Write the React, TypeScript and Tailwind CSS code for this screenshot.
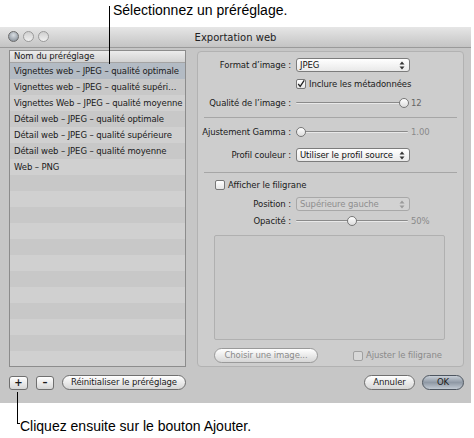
const ui = "font-['DejaVu_Sans',sans-serif] text-[8.5px] tracking-[-0.1px] text-[#1a1a1a]";

const presets = [
  "Vignettes web – JPEG – qualité optimale",
  "Vignettes web – JPEG – qualité supéri…",
  "Vignettes Web – JPEG – qualité moyenne",
  "Détail web – JPEG – qualité optimale",
  "Détail web – JPEG – qualité supérieure",
  "Détail web – JPEG – qualité moyenne",
  "Web – PNG",
];

function Arrows({ faded }: { faded?: boolean }) {
  const c = faded ? "#9a9a9a" : "#333";
  return (
    <svg width="6" height="9" viewBox="0 0 6 9" className="shrink-0">
      <path d="M3 0.5 L5.5 3.5 H0.5 Z" fill={c} />
      <path d="M3 8.5 L5.5 5.5 H0.5 Z" fill={c} />
    </svg>
  );
}

function Select({ value, disabled }: { value: string; disabled?: boolean }) {
  return (
    <div
      className={`flex h-[14px] w-[114px] items-center justify-between rounded-[3px] border pl-[3px] pr-[4px] ${
        disabled
          ? "border-[#a8a8a8] bg-[#d2d2d2] text-[#8e8e8e]"
          : "border-[#7c7c7c] bg-gradient-to-b from-white to-[#e9e9e9] text-[#111]"
      }`}
    >
      <span className="whitespace-nowrap leading-none">{value}</span>
      <Arrows faded={disabled} />
    </div>
  );
}

function Slider({ pos, value, faded }: { pos: number; value: string; faded?: boolean }) {
  return (
    <div className="flex items-center">
      <div className="relative h-[10px] w-[112px]">
        <div className="absolute left-0 right-0 top-[4px] h-[2px] rounded-full border-t border-[#8a8a8a] bg-[#e8e8e8]" />
        <div
          className="absolute top-0 h-[10px] w-[10px] rounded-full border border-[#777] bg-gradient-to-b from-white to-[#dcdcdc]"
          style={{ left: pos - 5 }}
        />
      </div>
      <span className={`ml-[3px] ${faded ? "text-[#8a8a8a]" : "text-[#666]"}`}>{value}</span>
    </div>
  );
}

function Check({ checked, faded }: { checked?: boolean; faded?: boolean }) {
  return (
    <div
      className={`flex h-[10px] w-[10px] shrink-0 items-center justify-center rounded-[2px] border ${
        faded ? "border-[#a0a0a0] bg-[#d8d8d8]" : "border-[#777] bg-gradient-to-b from-white to-[#e6e6e6]"
      }`}
    >
      {checked && (
        <svg width="10" height="10" viewBox="0 0 10 10">
          <path d="M1.5 5 L4 8 L9 0.5" stroke="#222" strokeWidth="1.6" fill="none" />
        </svg>
      )}
    </div>
  );
}

function Pill({ children, className = "" }: { children: React.ReactNode; className?: string }) {
  return (
    <div
      className={`flex h-[15px] items-center justify-center whitespace-nowrap rounded-full border border-[#6f6f6f] bg-gradient-to-b from-white to-[#d6d6d6] leading-none ${className}`}
    >
      {children}
    </div>
  );
}

function Row({ label, children, className = "" }: { label: string; children: React.ReactNode; className?: string }) {
  return (
    <div className={`flex h-[14px] items-center ${className}`}>
      <div className="flex w-[87px] justify-end whitespace-nowrap">{label}</div>
      <div className="ml-[5px]">{children}</div>
    </div>
  );
}

export default function App() {
  return (
    <div className="relative h-[438px] w-[474px] overflow-hidden bg-white">
      {/* top caption */}
      <div className="h-[27px] pl-[113px] pt-[1px] font-['Liberation_Sans',sans-serif] text-[14px] leading-[18px] text-black">
        Sélectionnez un préréglage.
      </div>

      {/* window */}
      <div className={`${ui} h-[376px] w-[471px] bg-[#c6c6c6]`}>
        <div className="relative flex h-[21px] items-center justify-center border-b border-[#9a9a9a] bg-gradient-to-b from-[#e6e6e6] to-[#c4c4c4]">
          <div className="absolute left-[8px] top-[4px] flex gap-[4px]">
            <div className="h-[11px] w-[11px] rounded-full border border-[#6c6c6c] bg-[radial-gradient(circle_at_50%_35%,#d8dde2,#7d8690)]" />
            <div className="h-[11px] w-[11px] rounded-full border border-[#9a9a9a] bg-gradient-to-b from-[#cfcfcf] to-[#f0f0f0]" />
            <div className="h-[11px] w-[11px] rounded-full border border-[#9a9a9a] bg-gradient-to-b from-[#cfcfcf] to-[#f0f0f0]" />
          </div>
          <span className="text-[10px] tracking-normal text-[#222]">Exportation web</span>
        </div>

        <div className="flex pl-[9px] pt-[2px]">
          {/* left column */}
          <div className="flex w-[177px] flex-col">
            <div className="h-[317px] overflow-hidden border border-[#8c8c8c] bg-[#cdcdcd]">
              <div className="flex h-[12px] items-center border-b border-[#a4a4a4] bg-gradient-to-b from-[#ececec] to-[#d2d2d2] pl-[4px]">
                Nom du préréglage
              </div>
              {Array.from({ length: 19 }).map((_, i) => (
                <div
                  key={i}
                  className={`flex h-[16px] items-center whitespace-nowrap pl-[4px] ${
                    i === 0 ? "bg-[#b3bbc4]" : i % 2 === 0 ? "bg-[#d0d0d0]" : "bg-[#c8c8c8]"
                  }`}
                >
                  {presets[i] ?? ""}
                </div>
              ))}
            </div>
            <div className="mt-[8px] flex items-center gap-[8px]">
              <div className="flex h-[14px] w-[19px] items-center justify-center rounded-[3px] border border-[#6f6f6f] bg-gradient-to-b from-white to-[#d6d6d6] text-[10px] font-bold leading-none">
                +
              </div>
              <div className="flex h-[14px] w-[18px] items-center justify-center rounded-[3px] border border-[#6f6f6f] bg-gradient-to-b from-white to-[#d6d6d6] text-[10px] font-bold leading-none">
                –
              </div>
              <Pill className="w-[124px]">Réinitialiser le préréglage</Pill>
            </div>
          </div>

          {/* right column */}
          <div className="ml-[11px] flex w-[267px] flex-col">
            <div className="mt-[1px] h-[316px] rounded-[4px] border border-[#b2b2b2] bg-[#cdcdcd] px-[6px] pt-[6px]">
              <Row label="Format d’image :">
                <Select value="JPEG" />
              </Row>
              <div className="ml-[92px] mt-[5px] flex h-[14px] items-center gap-[3px]">
                <Check checked />
                <span>Inclure les métadonnées</span>
              </div>
              <Row label="Qualité de l’image :" className="mt-[5px]">
                <Slider pos={108} value="12" />
              </Row>
              <div className="mt-[7px] h-px bg-[#a6a6a6]" />
              <Row label="Ajustement Gamma :" className="mt-[7px]">
                <Slider pos={5} value="1.00" faded />
              </Row>
              <Row label="Profil couleur :" className="mt-[9px]">
                <Select value="Utiliser le profil source" />
              </Row>
              <div className="mt-[10px] h-px bg-[#a6a6a6]" />
              <div className="ml-[11px] mt-[5px] flex h-[14px] items-center gap-[3px]">
                <Check />
                <span>Afficher le filigrane</span>
              </div>
              <Row label="Position :" className="mt-[5px]">
                <Select value="Supérieure gauche" disabled />
              </Row>
              <Row label="Opacité :" className="mt-[3px]">
                <Slider pos={56} value="50%" faded />
              </Row>
              <div className="ml-[10px] mt-[7px] h-[105px] w-[231px] rounded-[2px] border border-[#b0b0b0] bg-[#cacaca]" />
              <div className="ml-[10px] mt-[8px] flex items-center">
                <Pill className="w-[104px] border-[#9a9a9a] from-[#e2e2e2] to-[#d0d0d0] text-[#8a8a8a]">
                  Choisir une image...
                </Pill>
                <div className="ml-[35px] flex items-center gap-[3px] whitespace-nowrap text-[#8a8a8a]">
                  <Check faded />
                  <span>Ajuster le filigrane</span>
                </div>
              </div>
            </div>
            <div className="mt-[8px] flex justify-end gap-[7px]">
              <Pill className="w-[51px]">Annuler</Pill>
              <div className="flex h-[15px] w-[42px] items-center justify-center rounded-full border border-[#4e5660] bg-gradient-to-b from-[#c9d0d8] via-[#8f99a5] to-[#c2cad3] leading-none">
                OK
              </div>
            </div>
          </div>
        </div>
      </div>

      {/* bottom caption */}
      <div className="pl-[20px] pt-[14px] font-['Liberation_Sans',sans-serif] text-[14px] leading-[18px] text-black">
        Cliquez ensuite sur le bouton Ajouter.
      </div>

      {/* leader lines */}
      <div className="absolute left-[109px] top-[6px] h-[58px] w-px bg-black" />
      <div className="absolute left-[17px] top-[392px] h-[32px] w-px bg-black" />
      <div className="absolute left-[17px] top-[423px] h-px w-[3px] bg-black" />
    </div>
  );
}
